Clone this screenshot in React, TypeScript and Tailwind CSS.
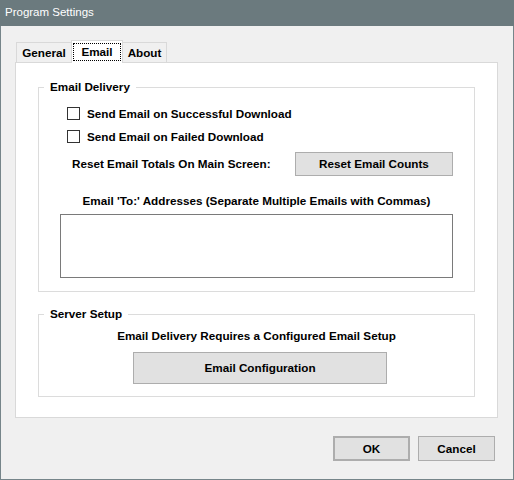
const btn = 'bg-[#e1e1e1] border border-[#adadad] flex items-center justify-center text-[11.7px] font-bold text-black';

function Checkbox({ label }: { label: string }) {
  return (
    <label className="flex items-center h-[13px] pl-[28px]">
      <span className="w-[13px] h-[13px] border border-[#333333] bg-white shrink-0" />
      <span className="ml-[7px] leading-[13px]">{label}</span>
    </label>
  );
}

export default function App() {
  return (
    <div className="w-[514px] h-[480px] flex flex-col bg-[#f0f0f0] border border-t-0 border-[#76858a] text-black font-['Liberation_Sans',Arial,sans-serif] select-none">
      {/* Title bar */}
      <div className="h-[26px] bg-[#6b7a7e] text-white text-[11.5px] pl-[5px] flex items-center -mx-px">
        Program Settings
      </div>

      {/* Tabs */}
      <div className="flex items-end h-[22px] mt-[14px] ml-[15px] text-[11.7px] font-bold">
        <div className="w-[55px] h-[20px] border-l border-t border-[#d9d9d9] flex items-center justify-center pt-[1px]">
          General
        </div>
        <div className="relative z-10 w-[52px] h-[23px] -mb-px border border-b-0 border-[#d9d9d9] bg-white pt-[2px] px-[1px]">
          <div className="h-[18px] border border-dotted border-black flex items-center justify-center">Email</div>
        </div>
        <div className="w-[44px] h-[20px] border-t border-r border-[#d9d9d9] flex items-center justify-center pt-[1px]">
          About
        </div>
      </div>

      {/* Panel */}
      <div className="w-[483px] h-[356px] ml-[14px] bg-white border border-[#d9d9d9] px-[22px] pt-[17px] text-[11.7px] font-bold">
        <fieldset className="h-[212px] border border-[#dcdcdc]">
          <legend className="ml-[5px] px-[6px] leading-[14px]">Email Delivery</legend>
          <div className="flex flex-col">
            <div className="mt-[13px]">
              <Checkbox label="Send Email on Successful Download" />
            </div>
            <div className="mt-[10px]">
              <Checkbox label="Send Email on Failed Download" />
            </div>
            <div className="mt-[9px] flex items-center">
              <span className="pl-[33px] leading-[14px]">Reset Email Totals On Main Screen:</span>
              <button className={`${btn} ml-auto mr-[21px] w-[158px] h-[24px]`}>Reset Email Counts</button>
            </div>
            <div className="mt-[18px] leading-[14px] text-center">
              Email 'To:' Addresses (Separate Multiple Emails with Commas)
            </div>
            <textarea className="mt-[6px] ml-[21px] w-[393px] h-[64px] border border-[#7a7a7a] bg-white resize-none outline-none" />
          </div>
        </fieldset>

        <fieldset className="mt-[15px] h-[90px] border border-[#dcdcdc]">
          <legend className="ml-[5px] px-[6px] leading-[14px]">Server Setup</legend>
          <div className="flex flex-col">
            <div className="mt-[8px] leading-[14px] text-center">Email Delivery Requires a Configured Email Setup</div>
            <button className={`${btn} mt-[9px] ml-[94px] w-[254px] h-[32px]`}>Email Configuration</button>
          </div>
        </fieldset>
      </div>

      {/* Dialog buttons */}
      <div className="flex justify-end gap-[8px] mt-[18px] mr-[18px]">
        <button className={`${btn} w-[77px] h-[25px] border-2 border-[#0078d7]`}>OK</button>
        <button className={`${btn} w-[77px] h-[25px]`}>Cancel</button>
      </div>
    </div>
  );
}
